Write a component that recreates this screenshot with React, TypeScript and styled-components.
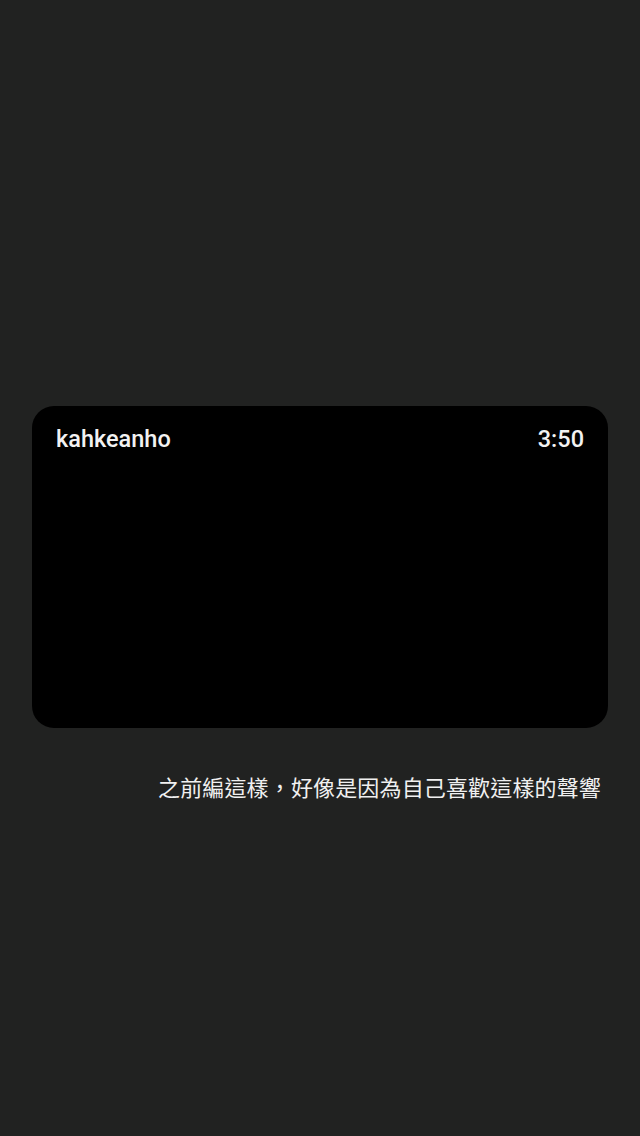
import React from 'react';
import styled, { createGlobalStyle } from 'styled-components';

const GlobalStyle = createGlobalStyle`
  html, body {
    margin: 0;
    padding: 0;
    background: #212221;
  }
  body {
    font-family: Roboto, "Noto Sans CJK TC", sans-serif;
  }
`;

const Page = styled.div`
  width: 640px;
  height: 1136px;
  box-sizing: border-box;
  padding: 406px 32px 0;
  display: flex;
  flex-direction: column;
  background: #212221;
`;

const Card = styled.div`
  height: 322px;
  box-sizing: border-box;
  padding: 20px 24px 0;
  background: #000;
  border-radius: 22px;
  display: flex;
  justify-content: space-between;
  align-items: flex-start;
`;

const Label = styled.span`
  color: #f2f2f2;
  font-family: Roboto, sans-serif;
  font-weight: 500;
  font-size: 23.5px;
  line-height: 27px;
`;

const Caption = styled.p`
  margin: 44px 7px 0 0;
  text-align: right;
  color: #f0f0f0;
  font-family: "Noto Sans CJK TC", sans-serif;
  font-size: 22px;
  letter-spacing: 0.15px;
  line-height: 28px;
`;

export default function App(): React.ReactElement {
  return (
    <>
      <GlobalStyle />
      <Page>
        <Card>
          <Label>kahkeanho</Label>
          <Label>3:50</Label>
        </Card>
        <Caption>之前編這樣，好像是因為自己喜歡這樣的聲響</Caption>
      </Page>
    </>
  );
}
